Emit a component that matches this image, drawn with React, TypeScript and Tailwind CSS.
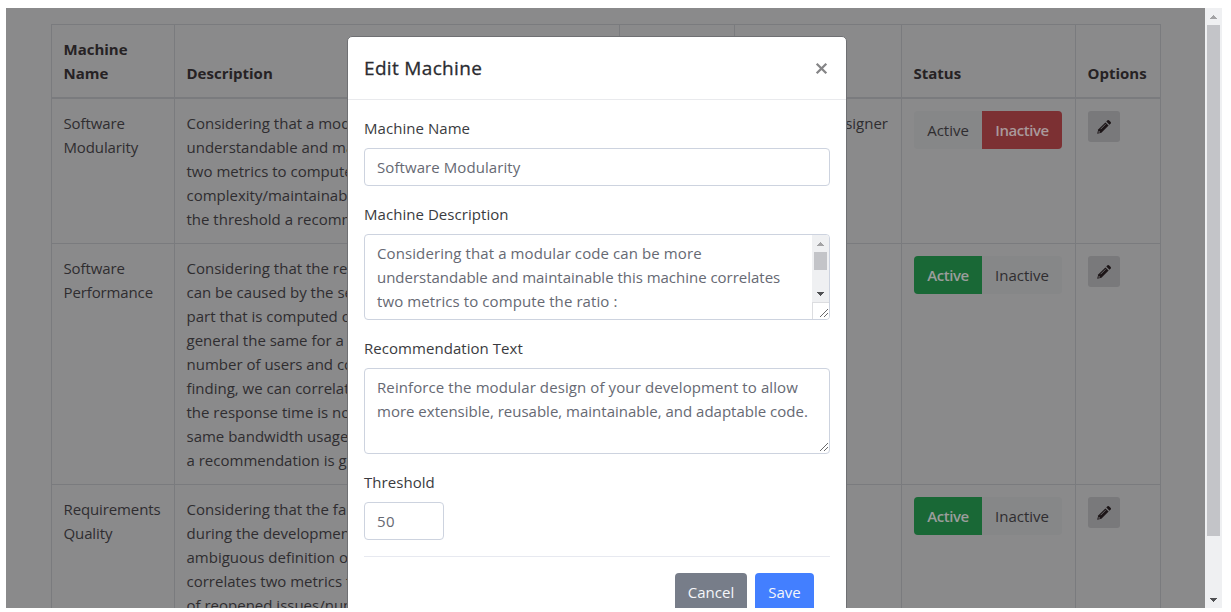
import type { ReactNode } from 'react';

interface Machine {
  name: string[];
  description: string[];
  audience: string;
  active: boolean;
}

const machines: Machine[] = [
  {
    name: ['Software', 'Modularity'],
    description: [
      'Considering that a modular',
      'understandable and main',
      'two metrics to compute',
      'complexity/maintainability',
      'the threshold a recommend',
    ],
    audience: 'Designer',
    active: false,
  },
  {
    name: ['Software', 'Performance'],
    description: [
      'Considering that the resp',
      'can be caused by the server',
      'part that is computed on',
      'general the same for a',
      'number of users and cons',
      'finding, we can correlate',
      'the response time is not',
      'same bandwidth usage',
      'a recommendation is given',
    ],
    audience: '',
    active: true,
  },
  {
    name: ['Requirements', 'Quality'],
    description: [
      'Considering that the fail',
      'during the development',
      'ambiguous definition of',
      'correlates two metrics to',
      'of reopened issues/num',
    ],
    audience: '',
    active: true,
  },
];

const columns = 'grid grid-cols-[123px_445px_115px_167px_174px_85px]';

function Cell({ children, className = '' }: { children?: ReactNode; className?: string }) {
  return (
    <div className={`overflow-hidden whitespace-nowrap border-l border-[#7a7b7e] py-3 ${className}`}>
      {children}
    </div>
  );
}

function Lines({ lines }: { lines: string[] }) {
  return (
    <>
      {lines.map((line) => (
        <div key={line}>{line}</div>
      ))}
    </>
  );
}

function PencilIcon() {
  return (
    <svg width="16" height="16" viewBox="0 0 16 16" className="-ml-px block">
      <path d="M1.2 14.8 2.2 10.6 9.4 3.4 12.6 6.6 5.4 13.8Z" fill="#1c1517" />
      <path d="M10.3 2.5 11.5 1.3Q12.2.7 12.9 1.3L14.7 3.1Q15.3 3.8 14.7 4.5L13.5 5.7Z" fill="#1c1517" />
      <path d="M4.6 10.2 9.6 5.2" stroke="#77777a" strokeWidth=".8" />
      <path d="M2.3 13.7 2.8 11.7 4.3 13.2Z" fill="#77777a" />
    </svg>
  );
}

function StatusToggle({ active }: { active: boolean }) {
  return (
    <div className="flex h-[38px] w-[148px] overflow-hidden rounded bg-[#868788] leading-[38px]">
      <div className={`w-[68px] text-center ${active ? 'bg-[#196836] font-semibold tracking-[-0.45px] text-[#9b9d9c]' : ''}`}>Active</div>
      <div className={`w-20 text-center ${active ? '' : 'bg-[#7c3033] font-semibold tracking-[-0.45px] text-[#a9999b]'}`}>Inactive</div>
    </div>
  );
}

const text = 'pl-[11.5px]';

function MachineTable() {
  return (
    <div className="ml-[45px] mt-4 w-[1110px] border-r border-t border-[#7a7b7e]">
      <div className={`${columns} h-[74px] items-stretch border-b-2 border-[#7a7b7e] font-bold text-[#262224]`}>
        <Cell className={text}>
          <Lines lines={['Machine', 'Name']} />
        </Cell>
        <Cell className={`flex items-end ${text}`}>Description</Cell>
        <Cell />
        <Cell />
        <Cell className={`flex items-end ${text}`}>Status</Cell>
        <Cell className={`flex items-end ${text}`}>Options</Cell>
      </div>
      {machines.map((m) => (
        <div key={m.name.join(' ')} className={`${columns} border-b border-[#7a7b7e]`}>
          <Cell className={`${text} tracking-[-0.12px]`}>
            <Lines lines={m.name} />
          </Cell>
          <Cell className={text}>
            <Lines lines={m.description} />
          </Cell>
          <Cell />
          <Cell className="pr-[13px] text-right">{m.audience}</Cell>
          <Cell className="pl-3">
            <StatusToggle active={m.active} />
          </Cell>
          <Cell className="pl-3">
            <div className="flex h-[31px] w-8 items-center justify-center rounded-[3px] bg-[#79797b]">
              <PencilIcon />
            </div>
          </Cell>
        </div>
      ))}
    </div>
  );
}

function Arrow({ down = false, color }: { down?: boolean; color: string }) {
  return (
    <svg width="8" height="4" viewBox="0 0 8 4" className="mr-px block" shapeRendering="crispEdges">
      <path d={down ? 'M0 0H8L4 4Z' : 'M0 4H8L4 0Z'} fill={color} />
    </svg>
  );
}

function ResizeGrip() {
  return (
    <svg width="9" height="9" viewBox="0 0 9 9" className="absolute bottom-px right-px" shapeRendering="crispEdges">
      <path d="M.5 8.5 8.5.5M4.5 8.5 8.5 4.5" stroke="#6a6a6c" strokeWidth="1" />
    </svg>
  );
}

function Field({ label, children }: { label: string; children: ReactNode }) {
  return (
    <div className="mb-4">
      <div className="mb-2 tracking-[0.05px] text-[#3a3b40]">{label}</div>
      {children}
    </div>
  );
}

const control = 'rounded border border-[#cdd3df] bg-white px-3 py-[6px] text-[#666973]';

function EditDialog() {
  return (
    <div className="absolute left-[341px] top-[28px] w-[500px] rounded-[5px] border border-[#6f7073] bg-white">
      <div className="flex h-[63px] items-center justify-between border-b border-[#e9eaed] px-4">
        <div className="text-[19px] font-medium tracking-[0.33px] text-[#2b2c31] [-webkit-text-stroke:0.3px_#2b2c31]">Edit Machine</div>
        <svg width="13" height="13" viewBox="0 0 13 13" className="mr-0.5">
          <path d="M1.7 1.7 11.3 11.3M11.3 1.7 1.7 11.3" stroke="#858587" strokeWidth="2.3" />
        </svg>
      </div>
      <div className="p-4">
        <Field label="Machine Name">
          <div className={`${control} h-[38px] tracking-[0.08px]`}>Software Modularity</div>
        </Field>
        <Field label="Machine Description">
          <div className={`${control} relative flex h-[86px] justify-between overflow-hidden whitespace-nowrap !p-0`}>
            <div className="px-3 py-[6px]">
              <div className="tracking-[0.1px]">Considering that a modular code can be more</div>
              <div className="tracking-[-0.02px]">understandable and maintainable this machine correlates</div>
              <div className="tracking-[0.09px]">two metrics to compute the ratio :</div>
            </div>
            <div className="w-[17px]">
              <div className="flex h-[67px] flex-col items-center bg-[#eff0f2]">
                <div className="flex h-[17px] items-center">
                  <Arrow color="#a3a3a5" />
                </div>
                <div className="h-[18px] w-[13px] bg-[#c3c4c8]" />
                <div className="mt-auto flex h-[17px] items-center">
                  <Arrow down color="#505154" />
                </div>
              </div>
              <div className="h-[17px] border-l border-t border-[#dcdde0] bg-white" />
            </div>
            <ResizeGrip />
          </div>
        </Field>
        <Field label="Recommendation Text">
          <div className={`${control} relative h-[86px] whitespace-nowrap`}>
            <div className="tracking-[0.1px]">Reinforce the modular design of your development to allow</div>
            <div>more extensible, reusable, maintainable, and adaptable code.</div>
            <ResizeGrip />
          </div>
        </Field>
        <Field label="Threshold">
          <div className={`${control} h-[38px] w-20 tracking-[0.3px]`}>50</div>
        </Field>
        <div className="flex justify-end gap-2 border-t border-[#e7e9f0] pr-4 pt-4 leading-[38px] text-[#f4f6fa]">
          <div className="h-[38px] w-[72px] rounded bg-[#777d89] text-center">Cancel</div>
          <div className="h-[38px] w-[59px] rounded bg-[#437fff] text-center">Save</div>
        </div>
      </div>
    </div>
  );
}

export default function App() {
  return (
    <div className="h-[612px] w-[1231px] overflow-hidden bg-white pl-1.5 pt-2 font-['Open_Sans',sans-serif] text-[15px] leading-6 text-[#2f2d30]">
      <div className="flex h-[600px] w-[1216px]">
        <div className="relative flex h-[600px] w-[1199px] flex-col overflow-hidden bg-[#8a8a8b]">
          <MachineTable />
          <EditDialog />
        </div>
        <div className="flex w-[17px] flex-col items-center bg-[#eff0f2]">
          <div className="flex h-[17px] items-center">
            <Arrow color="#a3a3a5" />
          </div>
          <div className="h-[511px] w-[13px] bg-[#c3c4c8]" />
          <div className="mt-auto flex h-[17px] items-center">
            <Arrow down color="#505154" />
          </div>
        </div>
      </div>
    </div>
  );
}
